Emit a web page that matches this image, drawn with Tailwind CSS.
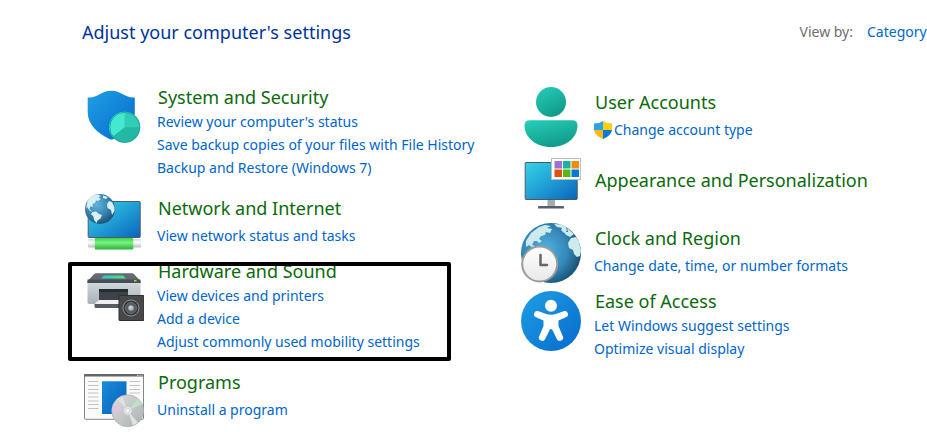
<!DOCTYPE html>
<html lang="en">
  <head>
    <meta charset="UTF-8" />
    <meta name="viewport" content="width=device-width, initial-scale=1.0" />
    <title>Control Panel</title>
    <script src="https://cdn.jsdelivr.net/npm/@tailwindcss/browser@4"></script>
  </head>
  <body class="min-h-screen bg-white font-['Noto_Sans','Open_Sans',sans-serif] text-[14px] leading-[23px] text-[#0066cc]">
    <header class="flex items-start justify-between pt-5 pl-[82px] whitespace-nowrap">
      <h1 class="text-[18px] leading-6 text-[#003399]">Adjust your computer's settings</h1>
      <div class="flex items-center gap-[14px]">
        <label for="view" class="text-[#6d6d6d]">View by:</label>
        <select id="view" class="appearance-none bg-transparent">
          <option>Category</option>
        </select>
      </div>
    </header>

    <main class="grid grid-cols-[437fr_406fr] pt-[41px] pb-1 pl-[84px] whitespace-nowrap">
      <div>
        <section class="flex items-start gap-[13px]">
          <svg class="size-15 shrink-0" viewBox="0 0 60 60" aria-hidden="true">
            <defs>
              <linearGradient id="shield" x1="0" y1="0" x2="1" y2="1">
                <stop offset="0" stop-color="#1fa0e4" />
                <stop offset="1" stop-color="#0669cd" />
              </linearGradient>
            </defs>
            <path d="M3.7 12.5C13 13.5 17 5.8 27.2 5.8S42 13.5 50.8 12.5V29C50.8 41 38 50.5 29 54.2Q27.2 54.8 25.5 54C14 48.5 3.7 40 3.7 27Z" fill="url(#shield)" />
            <circle cx="40.7" cy="42.3" r="15.5" fill="#22b8a4" />
            <path d="M40.7 42.3V26.8A15.5 15.5 0 0 1 56.2 42.3Z" fill="#31cdb8" />
            <path d="M40.7 42.3V26.8A15.5 15.5 0 0 0 28.5 51.8Z" fill="#42e8d0" />
            <circle cx="40.7" cy="42.3" r="15" fill="none" stroke="#1ca997" />
          </svg>
          <div>
            <h2 class="pl-px text-[18px] leading-[25px] text-[#0b6a0b]"><a href="#">System and Security</a></h2>
            <ul>
              <li><a href="#">Review your computer's status</a></li>
              <li><a href="#">Save backup copies of your files with File History</a></li>
              <li><a href="#">Backup and Restore (Windows 7)</a></li>
            </ul>
          </div>
        </section>

        <section class="mt-[13px] flex items-start gap-[13px]">
          <svg class="size-15 shrink-0" viewBox="0 0 60 60" aria-hidden="true">
            <defs>
              <linearGradient id="screen" x1="0" y1="0" x2="1" y2="1">
                <stop offset="0" stop-color="#36d3e8" />
                <stop offset="0.5" stop-color="#209fd5" />
                <stop offset="1" stop-color="#0964bd" />
              </linearGradient>
              <linearGradient id="cable" x1="0" y1="0" x2="0" y2="1">
                <stop offset="0" stop-color="#42cf4a" />
                <stop offset="0.4" stop-color="#78f57d" />
                <stop offset="1" stop-color="#2eae3d" />
              </linearGradient>
              <linearGradient id="plug" x1="0" y1="0" x2="0" y2="1">
                <stop offset="0" stop-color="#d9d9d9" />
                <stop offset="0.4" stop-color="#ffffff" />
                <stop offset="1" stop-color="#bdbdbd" />
              </linearGradient>
              <radialGradient id="globe" cx="0.4" cy="0.35" r="0.7">
                <stop offset="0" stop-color="#63b4df" />
                <stop offset="0.6" stop-color="#347fab" />
                <stop offset="1" stop-color="#194d70" />
              </radialGradient>
            </defs>
            <rect x="4.2" y="9.5" width="52" height="36" rx="0.8" fill="url(#screen)" stroke="#505b63" />
            <rect x="4" y="47" width="53" height="8.5" rx="1" fill="url(#plug)" />
            <rect x="10.8" y="46" width="38.5" height="11.5" rx="1" fill="url(#cable)" />
            <circle cx="16" cy="17" r="15" fill="url(#globe)" />
            <path d="M3.5 9C6 4.5 10 2.5 14 2.5L17 4 14.5 5.5 17 7 14 9 12 8.5 11 11 8.5 12 9 15 6.5 14 5.5 17 8 19.5 6 19 3 15 2 17ZM19 3.5L24 5 22 7 19 6ZM8.5 20L12 19.5 15 22 18 23 16.5 26.5 13.5 28.5 12.5 31 10 28 9.5 24.5 7 22ZM25 9L28 10 30.5 15 30.5 19 28 23 27 18 23.5 16 23 12Z" fill="#d9eff3" />
          </svg>
          <div class="pt-[3px]">
            <h2 class="mb-[3px] pl-px text-[18px] leading-[26px] text-[#0b6a0b]"><a href="#">Network and Internet</a></h2>
            <a href="#">View network status and tasks</a>
          </div>
        </section>

        <section class="relative mt-[7px] flex items-start gap-[13px]">
          <svg class="mt-[9px] size-15 shrink-0" viewBox="0 0 60 60" aria-hidden="true">
            <defs>
              <linearGradient id="printer" x1="0" y1="0" x2="0" y2="1">
                <stop offset="0" stop-color="#d2d9df" />
                <stop offset="1" stop-color="#a5b0b9" />
              </linearGradient>
              <linearGradient id="display" x1="0" y1="0" x2="1" y2="0">
                <stop offset="0" stop-color="#25c5dd" />
                <stop offset="1" stop-color="#51e57a" />
              </linearGradient>
            </defs>
            <path d="M3.5 14H56.5V34Q56.5 36 54.5 36H5.5Q3.5 36 3.5 34Z" fill="url(#printer)" />
            <path d="M12 5.3H48Q49 5.3 50 6.3L56.5 13V15H3.5V13L10 6.3Q11 5.3 12 5.3Z" fill="#646a70" />
            <path d="M3.5 11.5H56.5V15H3.5Z" fill="#484e53" />
            <path d="M20 7.5H39L42 10.5H17Z" fill="url(#display)" />
            <rect x="50" y="12" width="2.5" height="1.5" fill="#6ef22a" />
            <path d="M15 21H44V32H15Z" fill="#282c30" />
            <path d="M15 24H44V32H15Z" fill="#3d4348" />
            <path d="M15 32H44V36H10.5Z" fill="#eeeeee" />
            <path d="M10.5 36H44V40H12Q10.5 40 10.5 38.5Z" fill="#555b60" />
            <rect x="35" y="27.5" width="25" height="25" rx="0.5" fill="#484848" stroke="#303030" />
            <circle cx="47" cy="40" r="8" fill="#33373a" stroke="#8b9196" />
            <circle cx="47" cy="40" r="5.5" fill="#555b60" stroke="#697077" />
            <circle cx="47" cy="40" r="2.8" fill="#aab5be" />
            <circle cx="46.5" cy="39.5" r="1.2" fill="#d6dde2" />
          </svg>
          <div>
            <h2 class="pl-px text-[18px] leading-[25px] text-[#0b6a0b]"><a href="#">Hardware and Sound</a></h2>
            <ul>
              <li><a href="#">View devices and printers</a></li>
              <li><a href="#">Add a device</a></li>
              <li><a href="#">Adjust commonly used mobility settings</a></li>
            </ul>
          </div>
          <!-- highlight frame -->
          <div class="pointer-events-none absolute top-[3px] -left-4 h-[99px] w-[383px] rounded-xs border-4 border-black"></div>
        </section>

        <section class="mt-[13px] flex items-start gap-[13px]">
          <svg class="size-15 shrink-0 overflow-visible" viewBox="0 0 60 60" aria-hidden="true">
            <defs>
              <linearGradient id="pane" x1="0" y1="0" x2="1" y2="1">
                <stop offset="0" stop-color="#198bdd" />
                <stop offset="1" stop-color="#0561bb" />
              </linearGradient>
              <linearGradient id="disc" x1="0" y1="0" x2="1" y2="1">
                <stop offset="0" stop-color="#dadddd" />
                <stop offset="0.5" stop-color="#c3c7c7" />
                <stop offset="1" stop-color="#aab0b0" />
              </linearGradient>
            </defs>
            <rect x="0.5" y="8.8" width="59" height="44.5" rx="1" fill="#fafafa" stroke="#858585" />
            <path d="M0 10.5V9Q0 8 1 8H59Q60 8 60 9V10.5Z" fill="#676767" />
            <path d="M53 9.3H54.5M55.5 9.3H56.5M57.5 9.3H58.5" stroke="#ffffff" stroke-width="0.8" />
            <rect x="18" y="15.3" width="24.5" height="32.7" fill="url(#pane)" />
            <path d="M4 15.5H14.5M4 19.5H14.5M4 23.5H14.5M4 27H14.5M4 31H14.5M4 35H14.5M4 38.5H14.5M4 42.5H14.5M45.5 15.5H56M45.5 19.5H56M45.5 23.5H56M45.5 27H56" stroke="#c2c2c2" />
            <circle cx="43.7" cy="44.7" r="16" fill="url(#disc)" stroke="#a4a8a8" stroke-width="0.6" />
            <path d="M43.7 44.7L29 39 28 44Z" fill="#e7bfe6" />
            <path d="M43.7 44.7L54 33 58 38Z" fill="#bfe2c8" />
            <path d="M43.7 44.7L33 33 38 30ZM43.7 44.7L49 59.5 54 56.5Z" fill="#dfe2e2" />
            <circle cx="43.7" cy="44.7" r="4.5" fill="#e3e6e6" stroke="#b8bdbd" stroke-width="0.6" />
            <circle cx="43.7" cy="44.7" r="2" fill="#ffffff" stroke="#b5b9b9" stroke-width="0.5" />
          </svg>
          <div class="pt-[3px]">
            <h2 class="mb-[3px] pl-px text-[18px] leading-[26px] text-[#0b6a0b]"><a href="#">Programs</a></h2>
            <a href="#">Uninstall a program</a>
          </div>
        </section>
      </div>

      <div class="pt-0.5">
        <section class="flex items-start gap-[13px]">
          <svg class="size-15 shrink-0" viewBox="0 0 60 60" aria-hidden="true">
            <defs>
              <linearGradient id="person" x1="0" y1="0" x2="0.5" y2="1">
                <stop offset="0" stop-color="#27cfba" />
                <stop offset="1" stop-color="#119c8a" />
              </linearGradient>
            </defs>
            <circle cx="30" cy="15" r="15" fill="url(#person)" />
            <path d="M9 33.3H51Q56.5 33.3 56.5 38.5C56.5 50 46 60 30 60S3.5 50 3.5 38.5Q3.5 33.3 9 33.3Z" fill="url(#person)" />
          </svg>
          <div class="pt-0.5">
            <h2 class="mb-[3px] pl-px text-[18px] leading-[26px] text-[#0b6a0b]"><a href="#">User Accounts</a></h2>
            <a href="#" class="flex items-center gap-0.5">
              <svg class="size-[18px]" viewBox="0 0 18 18" aria-hidden="true">
                <path d="M9 0Q5.5 2.5 0 2.5V9H9Z" fill="#2ba4e5" />
                <path d="M9 0Q12.5 2.5 18 2.5V9H9Z" fill="#fdcf0b" />
                <path d="M0 9H9V18Q1 15 0 9Z" fill="#fbb817" />
                <path d="M18 9H9V18Q17 15 18 9Z" fill="#0c78d5" />
              </svg>
              Change account type
            </a>
          </div>
        </section>

        <section class="mt-[3px] flex items-center gap-[13px]">
          <svg class="size-15 shrink-0" viewBox="0 0 60 60" aria-hidden="true">
            <path d="M26.5 50H34V56H26.5Z" fill="#a4adb4" />
            <path d="M18 56H42Q43 56 43 57V58.5H17V57Q17 56 18 56Z" fill="#596167" />
            <rect x="4.2" y="12.5" width="52" height="37" rx="0.8" fill="url(#screen)" stroke="#4d5960" />
            <rect x="30.5" y="8.5" width="29" height="21" fill="#ffffff" stroke="#bcbcbc" />
            <rect x="33.5" y="11" width="7.5" height="7.5" fill="#9d70d6" />
            <rect x="42" y="11" width="7.5" height="7.5" fill="#17b4a1" />
            <rect x="50.5" y="11" width="7.5" height="7.5" fill="#f28c08" />
            <rect x="33.5" y="19.5" width="7.5" height="7.5" fill="#e24f12" />
            <rect x="42" y="19.5" width="7.5" height="7.5" fill="#57b80e" />
            <rect x="50.5" y="19.5" width="7.5" height="7.5" fill="#0078d7" />
          </svg>
          <h2 class="pl-px text-[18px] leading-[26px] text-[#0b6a0b]"><a href="#">Appearance and Personalization</a></h2>
        </section>

        <section class="mt-[13px] flex items-start gap-[13px]">
          <svg class="size-15 shrink-0" viewBox="0 0 60 60" aria-hidden="true">
            <defs>
              <radialGradient id="earth" cx="0.4" cy="0.45" r="0.62">
                <stop offset="0" stop-color="#51b4e5" />
                <stop offset="0.6" stop-color="#3488b8" />
                <stop offset="1" stop-color="#194e70" />
              </radialGradient>
              <linearGradient id="face" x1="0" y1="0" x2="0" y2="1">
                <stop offset="0" stop-color="#ffffff" />
                <stop offset="1" stop-color="#e8e8e8" />
              </linearGradient>
            </defs>
            <circle cx="30" cy="30" r="30" fill="url(#earth)" />
            <path d="M5 18L10 10 18 4 24 2 30 3 26 5 31 6 29 10 25 9 24 12 20 13 18 16 21 18 18 20 16 18 13 18 11 22 14 23 12 25 8 22 5 24ZM33 1L40 1.5 45 4 46 8 43 10 40 7 41 5 36 4ZM46 5L53 11 49 14 45 12 43 9 47 9ZM50 15L55 14 58 19 60 28 59 33 56 34 53 31 52 27 48 25 47 20Z" fill="#cdebed" />
            <circle cx="18.7" cy="41" r="17.5" fill="url(#face)" stroke="#9b9b9b" stroke-width="2" />
            <path d="M19.5 32V42H26" fill="none" stroke="#666666" stroke-width="2.5" stroke-linecap="round" stroke-linejoin="round" />
          </svg>
          <div class="pt-0.5">
            <h2 class="mb-[3px] pl-px text-[18px] leading-[26px] text-[#0b6a0b]"><a href="#">Clock and Region</a></h2>
            <a href="#">Change date, time, or number formats</a>
          </div>
        </section>

        <section class="mt-1.5 flex items-start gap-[13px]">
          <svg class="mt-0.5 size-15 shrink-0" viewBox="0 0 60 60" aria-hidden="true">
            <circle cx="30" cy="30" r="30" fill="url(#shield)" />
            <circle cx="30" cy="14.7" r="6" fill="#ffffff" />
            <path d="M17.5 20.3L24.5 22.8Q30 24.5 35.5 22.8L42.5 20.3A3.2 3.2 0 0 1 45 26.2L37.5 29.5V35L41.8 45.2A3.2 3.2 0 0 1 35.8 48L31.3 38.8Q30 37 28.7 38.8L24.2 48A3.2 3.2 0 0 1 18.2 45.2L22.5 35V29.5L15 26.2A3.2 3.2 0 0 1 17.5 20.3Z" fill="#ffffff" />
          </svg>
          <div>
            <h2 class="pl-px text-[18px] leading-[25px] text-[#0b6a0b]"><a href="#">Ease of Access</a></h2>
            <ul>
              <li><a href="#">Let Windows suggest settings</a></li>
              <li><a href="#">Optimize visual display</a></li>
            </ul>
          </div>
        </section>
      </div>
    </main>
  </body>
</html>
